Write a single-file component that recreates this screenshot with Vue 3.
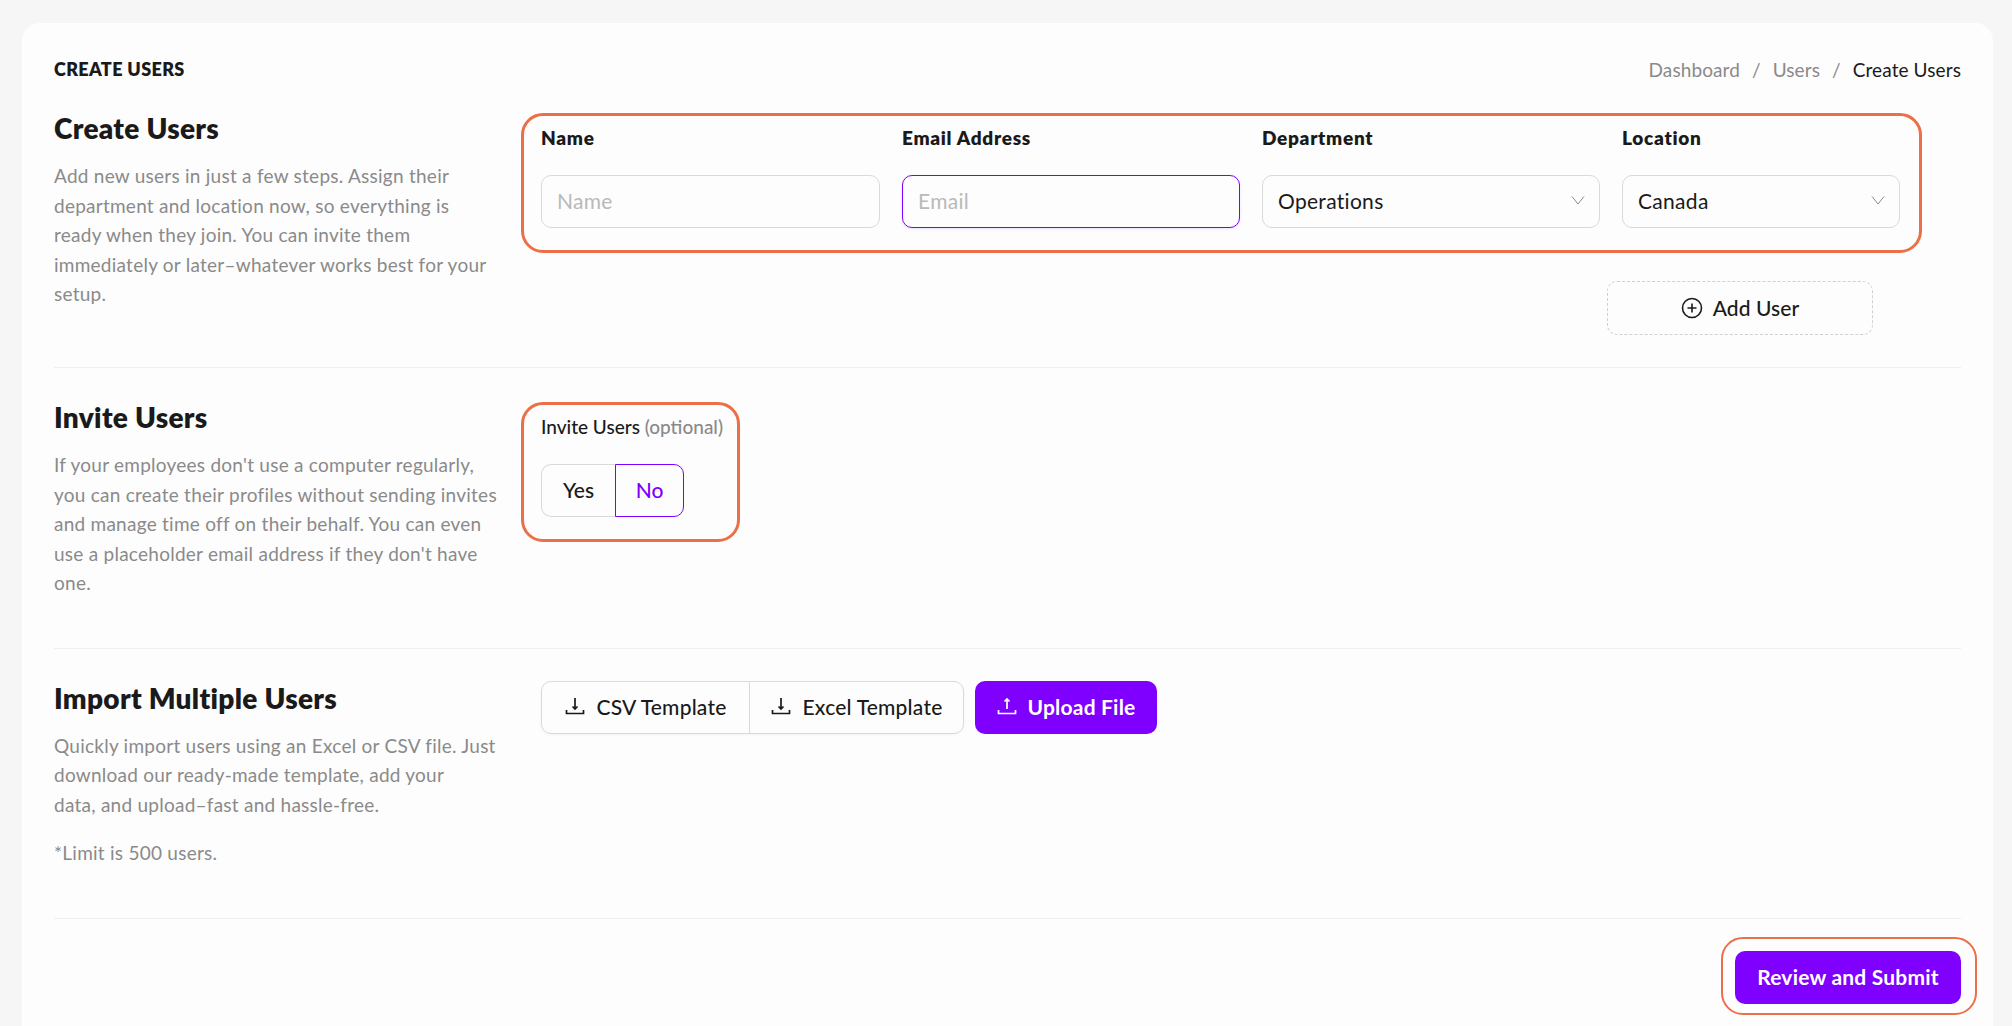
<script setup>
const fields = [
  { label: 'Name', type: 'input', placeholder: 'Name' },
  { label: 'Email Address', type: 'input', placeholder: 'Email', focused: true },
  { label: 'Department', type: 'select', value: 'Operations' },
  { label: 'Location', type: 'select', value: 'Canada' }
]
</script>

<template>
  <div class="page">
    <div class="card">
      <div class="header">
        <h1 class="page-title">CREATE USERS</h1>
        <div class="breadcrumb">
          <span class="crumb">Dashboard</span>
          <span class="crumb-sep">/</span>
          <span class="crumb">Users</span>
          <span class="crumb-sep">/</span>
          <span class="crumb-current">Create Users</span>
        </div>
      </div>

      <!-- Create users -->
      <section class="section first">
        <div class="intro">
          <h2>Create Users</h2>
          <p>Add new users in just a few steps. Assign their<br>department and location now, so everything is<br>ready when they join. You can invite them<br>immediately or later–whatever works best for your<br>setup.</p>
        </div>
        <div class="main">
          <div class="highlight field-grid">
            <div v-for="field in fields" :key="field.label" class="field">
              <label class="field-label">{{ field.label }}</label>
              <input
                v-if="field.type === 'input'"
                class="control"
                :class="{ focused: field.focused }"
                :placeholder="field.placeholder"
              >
              <div v-else class="control select">
                <span>{{ field.value }}</span>
                <svg class="chevron" width="14" height="9" viewBox="0 0 14 9" fill="none" stroke="#8a8a8a" stroke-width="1">
                  <path d="M1 .5 7 8 13 .5" />
                </svg>
              </div>
            </div>
          </div>
          <div class="add-row">
            <button class="btn-add">
              <svg width="22" height="22" viewBox="0 0 22 22" fill="none" stroke="#1a1a1a" stroke-width="1.6">
                <circle cx="11" cy="11" r="9.5" />
                <path d="M11 6.5v9M6.5 11h9" />
              </svg>
              Add User
            </button>
          </div>
        </div>
      </section>

      <!-- Invite users -->
      <section class="section">
        <div class="intro">
          <h2>Invite Users</h2>
          <p>If your employees don't use a computer regularly,<br>you can create their profiles without sending invites<br>and manage time off on their behalf. You can even<br>use a placeholder email address if they don't have<br>one.</p>
        </div>
        <div class="main">
          <div class="highlight invite">
            <div class="field-label normal">Invite Users <span class="optional">(optional)</span></div>
            <div class="toggle">
              <button class="toggle-btn">Yes</button>
              <button class="toggle-btn active">No</button>
            </div>
          </div>
        </div>
      </section>

      <!-- Import -->
      <section class="section last">
        <div class="intro">
          <h2>Import Multiple Users</h2>
          <p>Quickly import users using an Excel or CSV file. Just<br>download our ready-made template, add your<br>data, and upload–fast and hassle-free.</p>
          <p class="limit">*Limit is 500 users.</p>
        </div>
        <div class="main import-row">
          <div class="template-group">
            <button class="template-btn">
              <svg width="20" height="20" viewBox="0 0 20 20" fill="none" stroke="#1a1a1a" stroke-width="1.7">
                <path d="M10 2v11M7.500 10.500 10 13l2.500-2.500M1.500 14v3.500h17V14" />
              </svg>
              CSV Template
            </button>
            <button class="template-btn">
              <svg width="20" height="20" viewBox="0 0 20 20" fill="none" stroke="#1a1a1a" stroke-width="1.7">
                <path d="M10 2v11M7.500 10.500 10 13l2.500-2.500M1.500 14v3.500h17V14" />
              </svg>
              Excel Template
            </button>
          </div>
          <button class="btn-primary upload">
            <svg width="20" height="20" viewBox="0 0 20 20" fill="none" stroke="#fff" stroke-width="1.7">
              <path d="M10 13V3M7.500 5.500 10 3l2.500 2.500M1.500 14v3.500h17V14" />
            </svg>
            Upload File
          </button>
        </div>
      </section>

      <div class="footer">
        <button class="btn-primary submit">Review and Submit</button>
      </div>
    </div>
  </div>
</template>

<style scoped>
.page {
  padding: 23px 19px 0 22px;
  font-family: Lato, "Noto Sans", sans-serif;
  color: #1a1a1a;
}

.card {
  height: 1003px;
  box-sizing: border-box;
  background: #fdfdfd;
  border-radius: 18px 18px 0 0;
  padding: 0 32px;
}

.header {
  display: flex;
  justify-content: space-between;
  align-items: center;
  height: 90px;
  padding-top: 2px;
  box-sizing: border-box;
}

.page-title {
  margin: 0;
  font-size: 18px;
  font-weight: 800;
  letter-spacing: 0.35px;
}

.breadcrumb {
  display: flex;
  gap: 12px;
  font-size: 19px;
  letter-spacing: 0.1px;
  color: #8a8a8a;
}

.crumb-current {
  color: #1a1a1a;
}

.section {
  display: flex;
  padding: 34px 0 50px;
  border-bottom: 1px solid #eeeeee;
}

.section.first {
  padding: 0 0 32px;
}

.section.last {
  padding-bottom: 51px;
}

.intro {
  width: 467px;
  flex: none;
}

.intro h2 {
  margin: 0 0 18px;
  font-size: 28px;
  line-height: 30px;
  font-weight: 800;
  letter-spacing: 0.3px;
}

.intro p {
  margin: 0;
  font-size: 19px;
  line-height: 29.5px;
  letter-spacing: 0.25px;
  color: #8a8a8a;
  white-space: nowrap;
}

.intro p.limit {
  margin-top: 18.500px;
}

.main {
  flex: 1;
}

.highlight {
  border: 3px solid #ec6f48;
  border-radius: 22px;
  padding: 11px 18px 22px 17px;
  box-sizing: border-box;
}

.field-grid {
  display: grid;
  grid-template-columns: 339px 338px 338px 278px;
  gap: 22px;
  width: 1401px;
}

.field-label {
  display: block;
  height: 21px;
  line-height: 21px;
  margin-bottom: 27px;
  font-size: 19px;
  font-weight: 800;
  letter-spacing: 0.7px;
}

.field-label.normal {
  font-weight: 500;
  letter-spacing: 0;
  white-space: nowrap;
}

.optional {
  color: #8a8a8a;
}

.control {
  display: block;
  width: 100%;
  height: 53px;
  box-sizing: border-box;
  border: 1px solid #d9d9d9;
  border-radius: 10px;
  background: #fdfdfd;
  padding: 0 14px 2px 15px;
  font-family: inherit;
  font-size: 21px;
  letter-spacing: 0.3px;
  color: #1a1a1a;
  outline: none;
}

.control::placeholder {
  color: #b9b9b9;
}

.control.focused {
  border-color: #7f00ff;
  box-shadow: 0 1px 3px rgba(127, 0, 255, 0.12);
}

.select {
  display: flex;
  align-items: center;
  justify-content: space-between;
}

.add-row {
  display: flex;
  justify-content: flex-end;
  width: 1352px;
  margin-top: 28px;
}

.btn-add {
  display: flex;
  align-items: center;
  justify-content: center;
  gap: 10px;
  width: 266px;
  height: 54px;
  padding-bottom: 2px;
  border: 1px dashed #d0d0d0;
  border-radius: 10px;
  background: #fdfdfd;
  font-family: inherit;
  font-size: 21px;
  font-weight: 500;
  letter-spacing: 0.1px;
  color: #1a1a1a;
}

.invite {
  width: 219px;
}

.toggle {
  display: flex;
  width: 143px;
  height: 53px;
}

.toggle-btn {
  box-sizing: border-box;
  width: 74px;
  padding-bottom: 3px;
  border: 1px solid #d9d9d9;
  border-right: none;
  border-radius: 10px 0 0 10px;
  background: #fdfdfd;
  font-family: inherit;
  font-size: 21px;
  font-weight: 500;
  color: #1a1a1a;
}

.toggle-btn.active {
  width: 69px;
  border: 1px solid #7f00ff;
  border-radius: 0 10px 10px 0;
  color: #7f00ff;
}

.import-row {
  display: flex;
  gap: 11px;
  margin-top: -2px;
  padding-left: 20px;
  align-items: flex-start;
}

.template-group {
  display: flex;
  width: 423px;
  height: 53px;
  box-sizing: border-box;
  border: 1px solid #d9d9d9;
  border-radius: 10px;
  box-shadow: 0 1px 3px rgba(0, 0, 0, 0.04);
}

.template-btn {
  display: flex;
  align-items: center;
  justify-content: center;
  gap: 12px;
  flex: none;
  width: 207px;
  padding: 0 0 2px;
  border: none;
  background: none;
  font-family: inherit;
  font-size: 21px;
  font-weight: 500;
  letter-spacing: 0.2px;
  color: #1a1a1a;
}

.template-btn + .template-btn {
  width: 214px;
  border-left: 1px solid #d9d9d9;
}

.btn-primary {
  display: flex;
  align-items: center;
  justify-content: center;
  padding: 0 0 2px;
  border: none;
  border-radius: 10px;
  background: #7f00ff;
  color: #fff;
  font-family: inherit;
  font-size: 21px;
  font-weight: 700;
  letter-spacing: 0.2px;
}

.upload {
  gap: 11px;
  width: 182px;
  height: 53px;
}

.footer {
  display: flex;
  justify-content: flex-end;
  padding-top: 32px;
}

.submit {
  position: relative;
  width: 226px;
  height: 53px;
}

/* annotation ring round the button */
.submit::after {
  content: '';
  position: absolute;
  inset: -14px -16px -11px -14px;
  border: 2.500px solid #ec6f48;
  border-radius: 22px;
}
</style>

<style>
html, body {
  background: #f6f6f6;
  overflow: hidden;
}
</style>
